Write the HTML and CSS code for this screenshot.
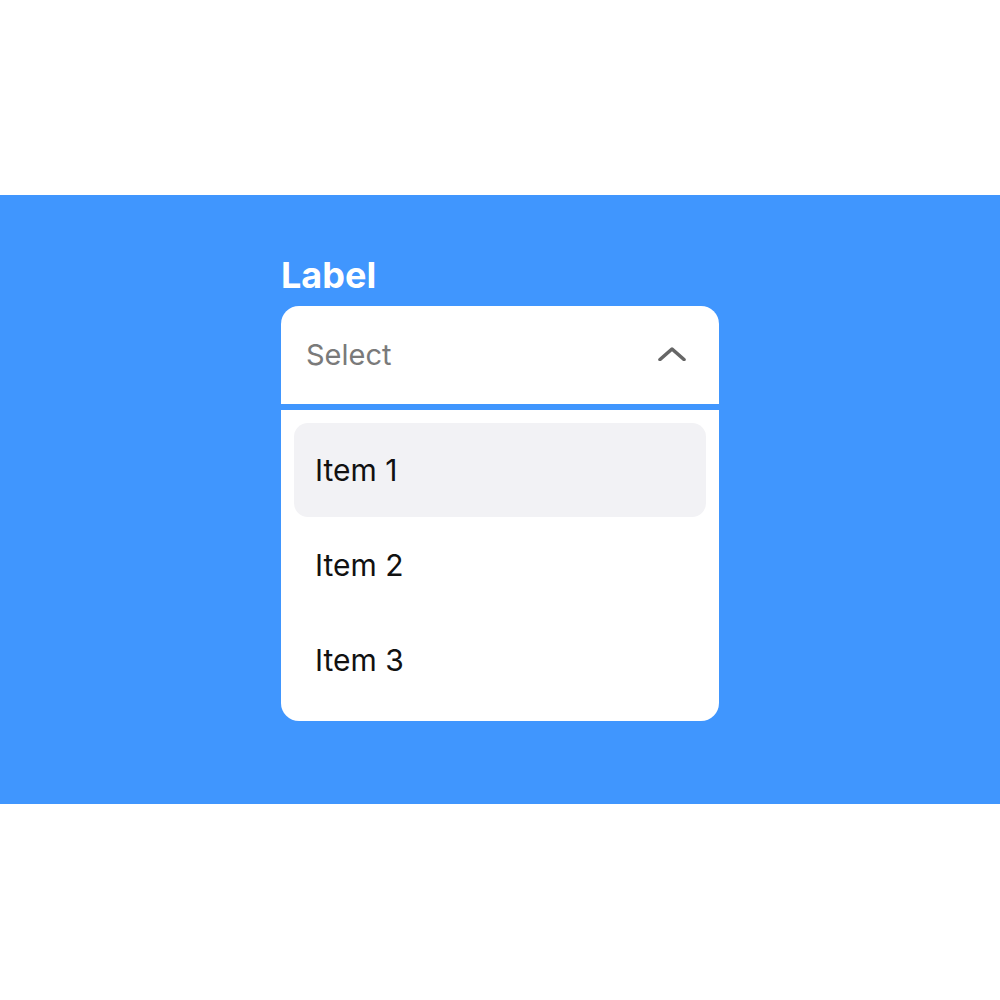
FILE: index.html
```html
<!DOCTYPE html>
<html>
<head>
<meta charset="utf-8">
<link rel="stylesheet" href="styles.css">
</head>
<body>
<div class="page">
  <section class="band">
    <div class="field">
      <div class="label">Label</div>
      <div class="select">
        <span class="placeholder">Select</span>
        <svg class="chevron" width="28" height="14" viewBox="0 0 28 14"><path d="M2 12.5 L14 2 L26 12.5" fill="none" stroke="#666" stroke-width="3.6" stroke-linecap="round" stroke-linejoin="round"/></svg>
      </div>
      <ul class="list">
        <li class="item active">Item 1</li>
        <li class="item">Item 2</li>
        <li class="item">Item 3</li>
      </ul>
    </div>
  </section>
</div>
</body>
</html>
```
FILE: styles.css
```css
* { box-sizing: border-box; }
html, body { margin: 0; padding: 0; background: #fff; }
body { font-family: Inter, "Noto Sans", sans-serif; }
.page { width: 1000px; height: 1000px; padding-top: 195px; }
.band {
  height: 609px;
  background: #4096fe;
  display: flex;
  justify-content: center;
  padding-top: 52px;
}
.field { width: 438px; display: flex; flex-direction: column; }
.label {
  color: #fff;
  font-size: 36px;
  font-weight: 700;
  line-height: 48px;
  height: 59px;
  padding-top: 4px;
}
.select {
  height: 98px;
  background: #fff;
  border-radius: 18px 18px 0 0;
  display: flex;
  align-items: center;
  justify-content: space-between;
  padding: 0 33px 0 25px;
  margin-bottom: 6px;
}
.placeholder { color: #7a7a7a; font-size: 29px; padding-bottom: 2px; }
.chevron { display: block; margin-top: -2px; }
.list {
  list-style: none;
  margin: 0;
  padding: 13px 13px 14px;
  background: #fff;
  border-radius: 0 0 18px 18px;
}
.item {
  height: 94px;
  display: flex;
  align-items: center;
  padding-left: 21px;
  font-size: 30px;
  color: #111;
  border-radius: 14px;
  margin-bottom: 1px;
}
.item:last-child { margin-bottom: 0; }
.item.active { background: #f2f2f5; }
```
